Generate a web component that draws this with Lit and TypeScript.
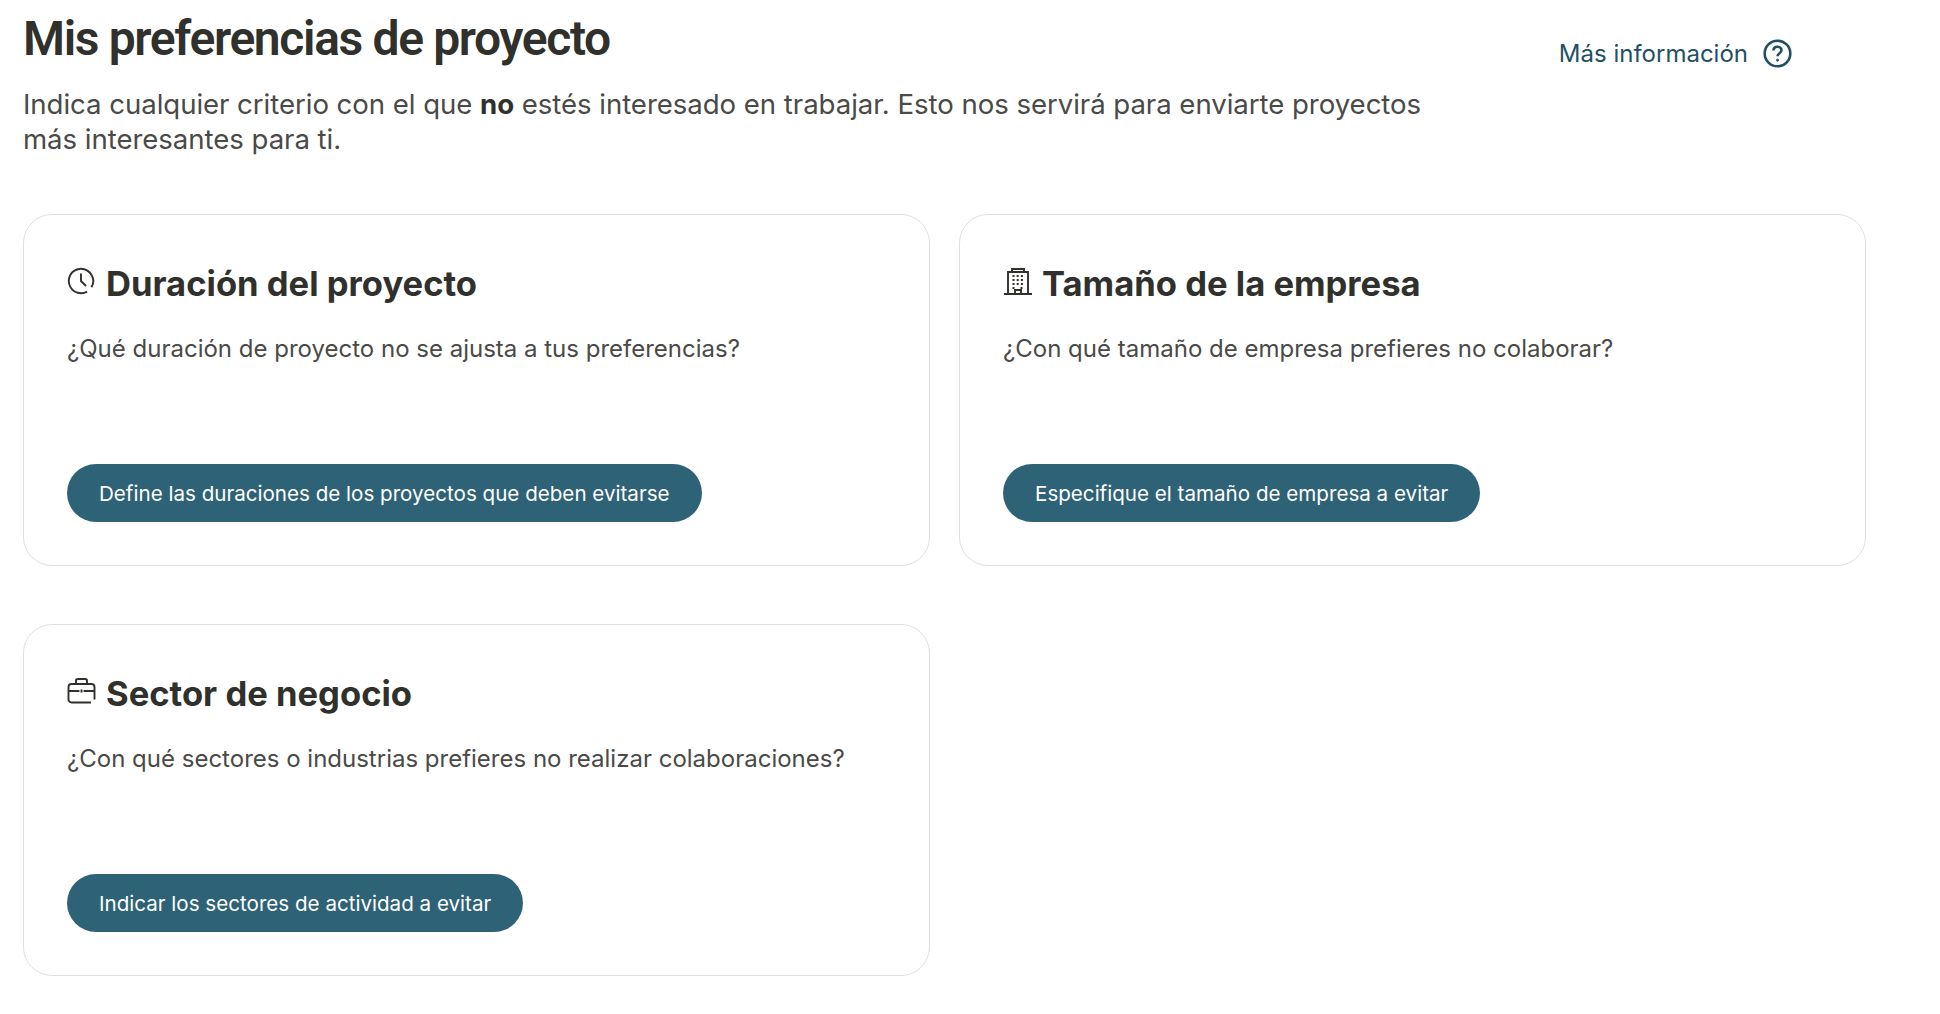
import { LitElement, html, css, svg } from "lit";
import { customElement } from "lit/decorators.js";

const clock = svg`<circle cx="14" cy="14" r="12.2" stroke-dasharray="70 6.7" transform="rotate(60 14 14)"/><path d="M14 6.5v7.5l5 5"/>`;
const building = svg`<path d="M1 27h28M5 27V5h20v22M9 5V2h12v3M12 27v-4h6v4"/><path stroke-width="2" stroke-dasharray="2 2.2" d="M9.5 9h11M9.5 13h11M9.5 17h11M9.5 21h3M17.5 21h3"/>`;
const briefcase = svg`<path d="M24 25.5H4.5a3 3 0 0 1-3-3V10a3 3 0 0 1 3-3h20a3 3 0 0 1 3 3v12.5"/><path d="M9 7V3.5C9 2.5 10 2 11 2h7c1 0 2 .5 2 1.5V7M1.5 14h11M16.5 14h11M14.5 12.5v3"/>`;

const cards = [
  { icon: clock, t: "Duración del proyecto", q: "¿Qué duración de proyecto no se ajusta a tus preferencias?", b: "Define las duraciones de los proyectos que deben evitarse" },
  { icon: building, t: "Tamaño de la empresa", q: "¿Con qué tamaño de empresa prefieres no colaborar?", b: "Especifique el tamaño de empresa a evitar" },
  { icon: briefcase, t: "Sector de negocio", q: "¿Con qué sectores o industrias prefieres no realizar colaboraciones?", b: "Indicar los sectores de actividad a evitar" },
];

@customElement("app-root")
export class AppRoot extends LitElement {
  static styles = css`
    :host { display: block; width: 1940px; height: 1014px; background: #fff; font-family: "Inter", "Liberation Sans", sans-serif; color: #30302c; overflow: hidden; }
    .page { padding: 0 0 0 23px; width: 1843px; box-sizing: content-box; }
    .head { display: flex; justify-content: space-between; align-items: flex-start; height: 214px; }
    .intro { width: 1440px; }
    h1 { margin: 14px 0 0; font: 600 48px/50px "Roboto", sans-serif; letter-spacing: -1.35px; color: #30302c; }
    .lead { margin: 23px 0 0; width: 1440px; font-size: 27.6px; line-height: 35px; font-weight: 400; color: #4a4a47; letter-spacing: -0.05px; }
    .lead b { font-weight: 700; color: #30302c; }
    .more { display: flex; align-items: center; gap: 15px; margin: 39px 74px 0 0; color: #1f5063; font-size: 24px; line-height: 30px; }
    .more svg { width: 29px; height: 29px; fill: none; stroke: currentColor; stroke-width: 2.6; margin-top: -1px; }
    .grid { display: grid; grid-template-columns: 907px 907px; column-gap: 29px; row-gap: 58px; }
    .card { box-sizing: border-box; height: 352px; border: 1px solid #e0e0dd; border-radius: 29px; padding: 46px 43px 43px; display: flex; flex-direction: column; align-items: flex-start; }
    .title { display: flex; align-items: center; gap: 10px; height: 44px; }
    .title svg { width: 29px; height: 29px; flex: none; fill: none; stroke: #30302c; stroke-width: 1.9; margin-top: -4px; }
    h2 { margin: 0; font-size: 34.6px; line-height: 44px; font-weight: 700; color: #30302c; }
    .q { margin: 28px 0 0; font-size: 24px; line-height: 32px; color: #4a4a47; }
    button { margin-top: auto; height: 58px; border: 0; border-radius: 29px; padding: 1px 32px 0; background: #2e6276; color: #fff; font: 400 20.6px/30px "Inter", sans-serif; }
  `;
  render() {
    return html`<div class="page">
      <div class="head">
        <div class="intro">
          <h1>Mis preferencias de proyecto</h1>
          <p class="lead">Indica cualquier criterio con el que <b>no</b> estés interesado en trabajar. Esto nos servirá para enviarte proyectos<br>más interesantes para ti.</p>
        </div>
        <div class="more"><span>Más información</span>
          <svg viewBox="0 0 29 29"><circle cx="14.5" cy="14.5" r="12.8"/><path d="M10.5 11.5c0-2.4 1.8-3.8 4-3.8s4 1.4 4 3.5c0 3-4 3-4 6"/><circle cx="14.5" cy="21.2" r="1" fill="currentColor" stroke-width="1"/></svg>
        </div>
      </div>
      <div class="grid">
        ${cards.map(c => html`<section class="card">
          <div class="title"><svg viewBox="0 0 29 29">${c.icon}</svg><h2>${c.t}</h2></div>
          <p class="q">${c.q}</p>
          <button>${c.b}</button>
        </section>`)}
      </div>
    </div>`;
  }
}
